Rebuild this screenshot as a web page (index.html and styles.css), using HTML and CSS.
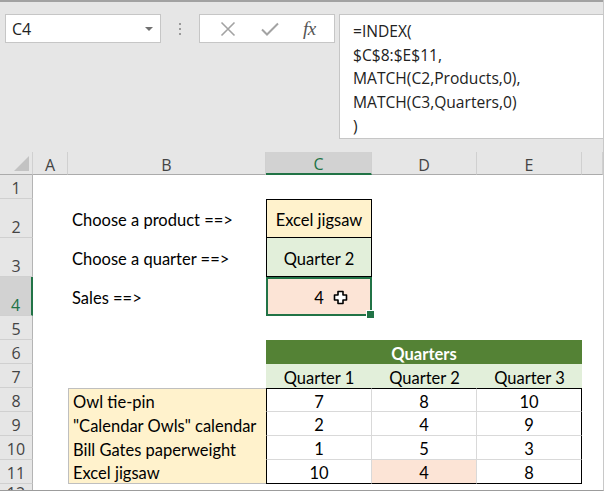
FILE: index.html
```html
<!DOCTYPE html>
<html>
<head>
<meta charset="utf-8">
<link rel="stylesheet" href="styles.css">
</head>
<body>
<div class="app">
  <div class="topbar">
    <div class="namebox"><span class="ref">C4</span><span class="caret"></span></div>
    <div class="grip"><i></i><i></i><i></i></div>
    <div class="fbtns">
      <svg class="ico" width="16" height="16" viewBox="0 0 16 16"><path d="M1.5 1.5 L14.5 14.5 M14.5 1.5 L1.5 14.5" stroke="#a3a3a3" stroke-width="1.6" fill="none"/></svg>
      <svg class="ico" width="18" height="14" viewBox="0 0 18 14"><path d="M1 7.5 L6 12.5 L17 1.5" stroke="#a3a3a3" stroke-width="2" fill="none"/></svg>
      <span class="fx">fx</span>
    </div>
    <div class="formula">
      <div>=INDEX(</div>
      <div>$C$8:$E$11,</div>
      <div>MATCH(C2,Products,0),</div>
      <div>MATCH(C3,Quarters,0)</div>
      <div>)</div>
    </div>
  </div>
  <div class="sheet">
    <!-- header row -->
    <div class="c corner"><span class="tri"></span></div>
    <div class="c ch">A</div>
    <div class="c ch">B</div>
    <div class="c ch sel">C</div>
    <div class="c ch">D</div>
    <div class="c ch">E</div>
    <div class="c ch"></div>
    <!-- row 1 -->
    <div class="c rh">1</div>
    <div class="c"></div><div class="c"></div><div class="c"></div><div class="c"></div><div class="c"></div><div class="c"></div>
    <!-- row 2 -->
    <div class="c rh">2</div>
    <div class="c"></div>
    <div class="c">Choose a product ==&gt;</div>
    <div class="c prod">Excel jigsaw</div>
    <div class="c"></div><div class="c"></div><div class="c"></div>
    <!-- row 3 -->
    <div class="c rh">3</div>
    <div class="c"></div>
    <div class="c">Choose a quarter ==&gt;</div>
    <div class="c qsel">Quarter 2</div>
    <div class="c"></div><div class="c"></div><div class="c"></div>
    <!-- row 4 -->
    <div class="c rh sel">4</div>
    <div class="c"></div>
    <div class="c">Sales ==&gt;</div>
    <div class="c sales">4
      <svg class="cursor" width="15" height="15" viewBox="0 0 15 15"><path d="M5 1.5 H10 V5 H13.5 V10 H10 V13.5 H5 V10 H1.5 V5 H5 Z" fill="#fff" stroke="#000" stroke-width="1.6" stroke-linejoin="round"/></svg>
    </div>
    <div class="c"></div><div class="c"></div><div class="c"></div>
    <!-- row 5 -->
    <div class="c rh">5</div>
    <div class="c"></div><div class="c"></div><div class="c"></div><div class="c"></div><div class="c"></div><div class="c"></div>
    <!-- row 6 -->
    <div class="c rh">6</div>
    <div class="c"></div><div class="c"></div>
    <div class="c qhead">Quarters</div>
    <div class="c"></div>
    <!-- row 7 -->
    <div class="c rh">7</div>
    <div class="c"></div><div class="c"></div>
    <div class="c qsub">Quarter 1</div>
    <div class="c qsub">Quarter 2</div>
    <div class="c qsub">Quarter 3</div>
    <div class="c"></div>
    <!-- row 8 -->
    <div class="c rh">8</div>
    <div class="c"></div>
    <div class="c pname t">Owl tie-pin</div>
    <div class="c num l t">7</div>
    <div class="c num t">8</div>
    <div class="c num r t">10</div>
    <div class="c"></div>
    <!-- row 9 -->
    <div class="c rh">9</div>
    <div class="c"></div>
    <div class="c pname">"Calendar Owls" calendar</div>
    <div class="c num l">2</div>
    <div class="c num">4</div>
    <div class="c num r">9</div>
    <div class="c"></div>
    <!-- row 10 -->
    <div class="c rh">10</div>
    <div class="c"></div>
    <div class="c pname">Bill Gates paperweight</div>
    <div class="c num l">1</div>
    <div class="c num">5</div>
    <div class="c num r">3</div>
    <div class="c"></div>
    <!-- row 11 -->
    <div class="c rh">11</div>
    <div class="c"></div>
    <div class="c pname b">Excel jigsaw</div>
    <div class="c num l b">10</div>
    <div class="c num b hl">4</div>
    <div class="c num r b">8</div>
    <div class="c"></div>
    <!-- row 12 -->
    <div class="c rh last">12</div>
    <div class="c"></div><div class="c"></div><div class="c"></div><div class="c"></div><div class="c"></div><div class="c"></div>
  </div>
</div>
</body>
</html>
```

FILE: styles.css
```css
* { box-sizing: border-box; }
body { margin: 0; background: #ffffff; }

.app {
  width: 604px;
  height: 491px;
  background: #e6e6e6;
  border-right: 1px solid #c8c8c8;
  border-bottom: 1px solid #9c9c9c;
  overflow: hidden;
}

.topbar {
  height: 152px;
  border-top: 2px solid #a2a2a2;
  padding: 12px 0 0 5px;
  display: flex;
  align-items: flex-start;
  font-family: "Open Sans", "Liberation Sans", sans-serif;
}

.namebox {
  width: 156px;
  height: 29px;
  background: #fff;
  border: 1px solid #c6c6c6;
  display: flex;
  align-items: center;
  justify-content: space-between;
  padding: 0 7px 0 6px;
  font-size: 16px;
  color: #222;
}
.caret {
  width: 0; height: 0;
  border-left: 4px solid transparent;
  border-right: 4px solid transparent;
  border-top: 4px solid #707070;
}

.grip {
  width: 38px;
  height: 29px;
  display: flex;
  flex-direction: column;
  align-items: center;
  justify-content: center;
  gap: 3px;
}
.grip i {
  display: block;
  width: 2px;
  height: 2px;
  background: #9a9a9a;
}

.fbtns {
  width: 136px;
  height: 29px;
  background: #fff;
  border: 1px solid #c6c6c6;
  display: flex;
  align-items: center;
  justify-content: space-around;
  padding: 0 6px 0 8px;
}
.fx {
  font-family: "Liberation Serif", serif;
  font-style: italic;
  font-size: 19px;
  color: #555;
  letter-spacing: -0.5px;
}

.formula {
  flex: 1;
  height: 125px;
  margin-left: 4px;
  background: #fff;
  border: 1px solid #c6c6c6;
  border-right: none;
  padding: 5px 0 0 13px;
  font-size: 15.6px;
  line-height: 23.7px;
  color: #222;
}

.sheet {
  display: grid;
  grid-template-columns: 33px 35px 198px 106px 105px 105px 21px;
  grid-template-rows: 23px 24px 39px 39px 39px repeat(7, 24px) 6px;
  background: #fff;
  font-family: "Lato", "Liberation Sans", sans-serif;
  font-size: 16.5px;
  color: #000;
}

.c {
  display: flex;
  align-items: center;
  padding: 3px 4px 0;
  white-space: nowrap;
  min-width: 0;
}

.corner {
  background: #e6e6e6;
  border-right: 1px solid #d0d0d0;
  border-bottom: 1px solid #ababab;
  position: relative;
}
.tri {
  position: absolute;
  right: 3px;
  bottom: 3px;
  width: 0; height: 0;
  border-left: 15px solid transparent;
  border-bottom: 15px solid #c3c3c3;
}

.ch {
  background: #e6e6e6;
  border-right: 1px solid #d0d0d0;
  border-bottom: 1px solid #ababab;
  justify-content: center;
  font-family: "Open Sans", sans-serif;
  font-size: 16px;
  color: #444;
}
.ch.sel {
  background: #d2d2d2;
  border-bottom: 2px solid #217346;
  color: #217346;
}

.rh {
  background: #e6e6e6;
  border-right: 1px solid #b4b4b4;
  border-bottom: 1px solid #d0d0d0;
  justify-content: center;
  align-items: flex-end;
  padding: 0 2px;
  font-family: "Open Sans", sans-serif;
  font-size: 16px;
  line-height: 20px;
  color: #444;
  overflow: hidden;
}
.rh.sel {
  background: #d2d2d2;
  border-right: 2px solid #217346;
  color: #217346;
}
.rh.last {
  align-items: flex-start;
  line-height: 16px;
  padding-top: 1px;
  border-bottom: none;
}

.prod {
  background: #fff2cc;
  border: 1px solid #000;
  justify-content: center;
}
.qsel {
  background: #e2efda;
  border: 1px solid #000;
  border-top: none;
  justify-content: center;
}
.sales {
  background: #fce4d6;
  border: 2px solid #217346;
  justify-content: center;
  position: relative;
}
.sales::after {
  content: "";
  position: absolute;
  right: -5px;
  bottom: -5px;
  width: 7px;
  height: 7px;
  background: #217346;
  border: 1px solid #fff;
}
.cursor {
  position: absolute;
  left: 65px;
  top: 11px;
}

.qhead {
  grid-column: span 3;
  background: #548235;
  color: #fff;
  font-weight: bold;
  justify-content: center;
}
.qsub {
  background: #e2efda;
  justify-content: center;
}

.pname {
  background: #fff2cc;
  border-left: 1px solid #bfbfbf;
}
.pname.t { border-top: 1px solid #bfbfbf; }
.pname.b { border-bottom: 1px solid #bfbfbf; }

.num {
  justify-content: center;
  border-right: 1px solid #d9d9d9;
  border-bottom: 1px solid #d9d9d9;
}
.num.l { border-left: 1px solid #000; }
.num.r { border-right: 1px solid #000; }
.num.t { border-top: 1px solid #000; }
.num.b { border-bottom: 1px solid #000; }
.hl { background: #fce4d6; }
```
